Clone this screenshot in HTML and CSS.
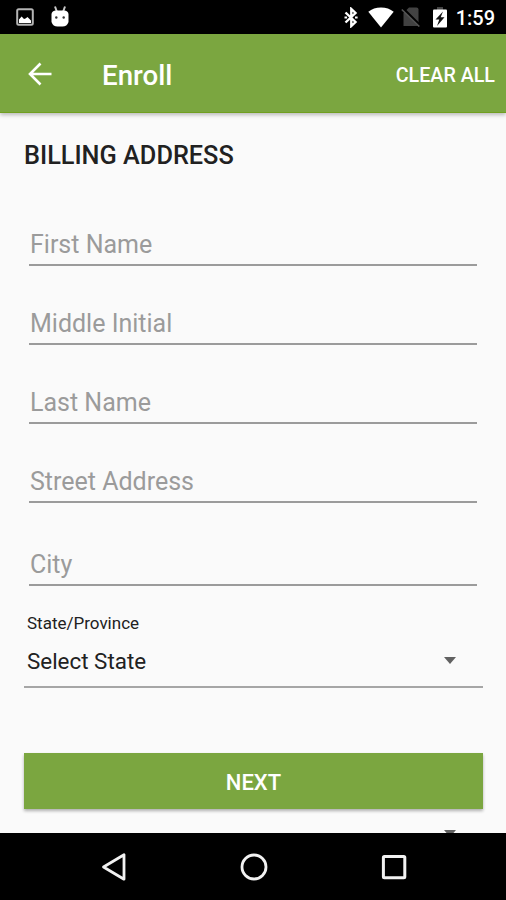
FILE: index.html
```html
<!DOCTYPE html>
<html lang="en">
<head>
    <meta charset="UTF-8">
    <meta name="viewport" content="width=device-width, initial-scale=1.0">
    <title>Enroll</title>
    <link rel="stylesheet" href="styles.css">
</head>
    <body>

        <!-- Status bar -->
        <div class="status-bar">
            <svg class="icon-picture" width="18" height="18" viewBox="0 0 18 18">
                <rect x="1.2" y="1.2" width="15.6" height="15.6" rx="1.5" fill="none" stroke="#b4b4b4" stroke-width="2"/>
                <path d="M3 15V11.5L5.6 8.5L8 11L9.5 10.5L11.5 9L15 12.5V15Z" fill="#fff"/>
            </svg>
            <svg class="icon-android" width="18" height="21" viewBox="0 0 18 21">
                <path d="M4 .5L6 6M14 .5L12 6" stroke="#c8c8c8" stroke-width="2"/>
                <path d="M.5 8Q1 4.500 5 4.500H13Q17 4.500 17.500 8V16Q16 20.500 11.500 20.500H6.500Q2 20.500 .5 16Z" fill="#fff"/>
                <circle cx="5.3" cy="11.5" r="1.2" fill="#333"/>
                <circle cx="12.7" cy="11.5" r="1.2" fill="#333"/>
            </svg>
            <div class="status-right">
                <svg class="icon-bluetooth" width="14" height="21" viewBox="0 0 14 21">
                    <path d="M1.500 5.500L11.500 15L7.300 19V2L11.500 6L1.500 15.500" fill="none" stroke="#fff" stroke-width="2.400"/>
                    <path d="M.5 10.500h2.600M11 10.500h2.600" stroke="#fff" stroke-width="2.200"/>
                </svg>
                <svg class="icon-wifi" width="26" height="21" viewBox="0 0 26 21">
                    <path d="M.3 4.800Q5.500.5 13 .5T25.700 4.800L13 20.500Z" fill="#fff"/>
                </svg>
                <svg class="icon-no-sim" width="20" height="20" viewBox="0 0 20 20">
                    <path d="M8 .5H15.500Q17.500.5 17.500 2.500V19H2.500V6Z" fill="#424242"/>
                    <path d="M1.800 1.500L19.300 19" stroke="#000" stroke-width="3"/>
                    <path d="M.8 2.500L18.300 19.500" stroke="#555" stroke-width="1.600"/>
                </svg>
                <svg class="icon-battery" width="14" height="21" viewBox="0 0 14 21">
                    <path d="M4 0H10V3H4Z" fill="#444"/>
                    <rect x="0" y="2.500" width="14" height="18" rx="1" fill="#fff"/>
                    <path d="M10 4.500L2.500 12.500H6.300L4 19L11.500 10.300H7.700Z" fill="#111"/>
                </svg>
                <span class="clock">1:59</span>
            </div>
        </div>

        <!-- App bar -->
        <header class="app-bar">
            <svg class="icon-back" width="24" height="24" viewBox="0 0 24 24">
                <path d="M23.500 12H2.500M12.500 1.500L2 12L12.500 22.500" fill="none" stroke="#fff" stroke-width="2.600"/>
            </svg>
            <h1 class="title">Enroll</h1>
            <button class="clear-button" type="reset" form="billingForm">CLEAR ALL</button>
        </header>

        <!-- Billing form -->
        <form class="content" id="billingForm">
            <h2 class="section-title">BILLING ADDRESS</h2>

            <div class="fields">
                <input type="text" class="field" placeholder="First Name">
                <input type="text" class="field" placeholder="Middle Initial">
                <input type="text" class="field" placeholder="Last Name">
                <input type="text" class="field" placeholder="Street Address">
                <input type="text" class="field field-city" placeholder="City">
            </div>

            <label class="state-label" for="state">State/Province</label>
            <div class="select-row">
                <select class="state-select" id="state">
                    <option>Select State</option>
                </select>
                <span class="caret"></span>
            </div>

            <button class="next-button" type="button">NEXT</button>

            <div class="next-row">
                <span class="caret"></span>
            </div>
        </form>

        <!-- Navigation bar -->
        <nav class="nav-bar">
            <svg width="28" height="30" viewBox="0 0 28 30">
                <path d="M24 2.800V27.200L3.500 15Z" fill="none" stroke="#f2f2f2" stroke-width="2.800" stroke-linejoin="round"/>
            </svg>
            <svg width="28" height="30" viewBox="0 0 28 30">
                <circle cx="14" cy="15" r="12" fill="none" stroke="#f2f2f2" stroke-width="2.800"/>
            </svg>
            <svg width="28" height="30" viewBox="0 0 28 30">
                <rect x="3.400" y="4.400" width="21.400" height="21.400" rx="1" fill="none" stroke="#f2f2f2" stroke-width="3"/>
            </svg>
        </nav>

    </body>
</html>
```

FILE: styles.css
```css
* {
    box-sizing: border-box;
}

body {
    display: flex;
    flex-direction: column;
    height: 900px;
    margin: 0;
    overflow: hidden;
    font-family: Roboto, sans-serif;
    background-color: #fafafa;
}

svg {
    display: block;
    flex: none;
}

/* Status bar */
.status-bar {
    display: flex;
    flex: none;
    align-items: center;
    height: 34px;
    padding: 0 11px 0 16px;
    background-color: #000;
}

.icon-android {
    margin: -2px 0 0 17px;
}

.status-right {
    display: flex;
    align-items: center;
    margin-left: auto;
}

.icon-bluetooth {
    margin-right: 1px;
}

.icon-wifi {
    margin-left: 9px;
}

.icon-no-sim {
    margin-left: 7px;
}

.icon-battery {
    margin-left: 12px;
}

.clock {
    margin: 2px 0 0 9px;
    font-size: 20px;
    font-weight: 500;
    line-height: 34px;
    color: #fff;
}

/* App bar */
.app-bar {
    display: flex;
    flex: none;
    align-items: center;
    height: 79px;
    padding: 0 11px 0 28px;
    background-color: #7ba640;
    border-bottom: 1px solid #709f20;
    box-shadow: 0 2px 4px rgba(0, 0, 0, 0.26);
}

.icon-back {
    margin-top: 1px;
}

.title {
    margin: 4px 0 0 50px;
    font-size: 27.7px;
    font-weight: 500;
    color: #fff;
}

.clear-button {
    margin: 4px 0 0 auto;
    padding: 0;
    font-family: inherit;
    font-size: 19.7px;
    font-weight: 500;
    color: #fff;
    background: none;
    border: none;
}

/* Billing form */
.content {
    display: flex;
    flex: 1;
    flex-direction: column;
    min-height: 0;
    padding: 27px 23px 0 24px;
    overflow: hidden;
}

.section-title {
    flex: none;
    margin: 0 0 51px;
    font-size: 25.3px;
    font-weight: 500;
    line-height: 32px;
    color: #212121;
}

.fields {
    display: flex;
    flex: none;
    flex-direction: column;
    gap: 36px;
    padding: 0 6px 0 5px;
}

.field {
    height: 43px;
    padding: 2px 0 0 1px;
    font-family: inherit;
    font-size: 25px;
    color: #212121;
    background: none;
    border: none;
    border-bottom: 2px solid #9b9b9b;
    border-radius: 0;
    outline: none;
}

.field::placeholder {
    color: #9b9b9b;
}

.field-city {
    margin-top: 4px;
}

.state-label {
    flex: none;
    margin-top: 26px;
    padding-left: 3px;
    font-size: 17px;
    line-height: 22px;
    color: #212121;
}

.select-row {
    display: flex;
    flex: none;
    align-items: center;
    height: 54px;
    padding: 0 27px 0 3px;
    border-bottom: 2px solid #a6a6a6;
}

.state-select {
    flex: 1;
    padding: 2px 0 0;
    font-family: inherit;
    font-size: 22.4px;
    color: #212121;
    appearance: none;
    background: none;
    border: none;
}

.caret {
    border: 6px solid transparent;
    border-top: 7px solid #616161;
    border-bottom: none;
}

.next-button {
    flex: none;
    height: 56px;
    margin-top: 65px;
    padding-top: 3px;
    font-family: inherit;
    font-size: 22px;
    font-weight: 500;
    color: #fff;
    background-color: #7ba640;
    border: none;
    box-shadow: 0 2px 3px rgba(0, 0, 0, 0.3);
}

/* Next dropdown, cut off by the navigation bar */
.next-row {
    display: flex;
    flex: none;
    justify-content: flex-end;
    margin-top: 21px;
    padding-right: 27px;
}

/* Navigation bar */
.nav-bar {
    display: flex;
    flex: none;
    align-items: center;
    justify-content: center;
    gap: 112px;
    height: 67px;
    padding-left: 1px;
    background-color: #000;
}
```
